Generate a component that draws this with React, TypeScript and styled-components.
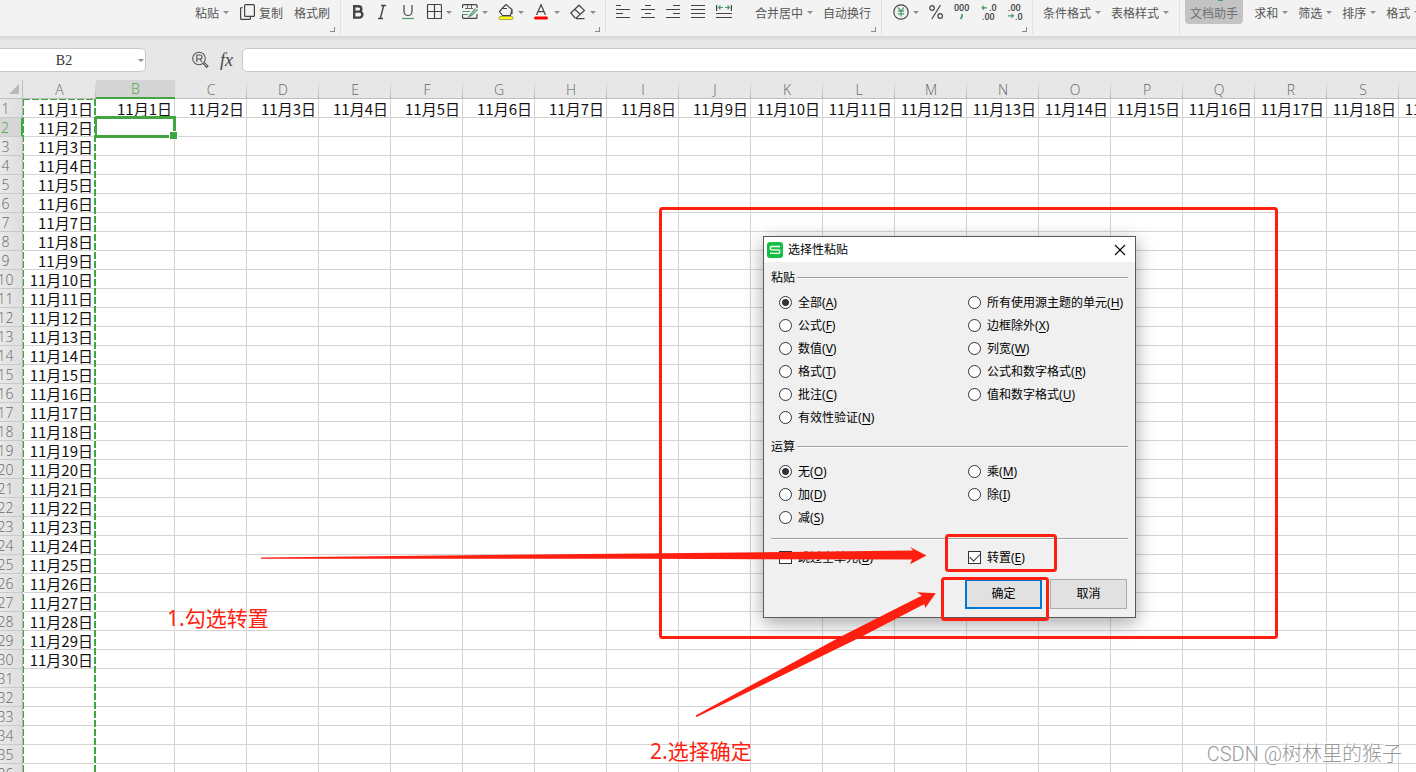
import React from "react";
import styled, { createGlobalStyle, css } from "styled-components";

const RED = "#ff1f10";
const GREEN = "#41a541";
const INK = "#444444";
const ICON_GREEN = "#4f9a6d";

const GlobalStyle = createGlobalStyle`
  * { box-sizing: border-box; }
  html, body { margin: 0; padding: 0; overflow: hidden; }
  body, button, input { font-family: "Noto Sans", "Noto Sans CJK SC", sans-serif; }
  button { margin: 0; padding: 0; border: 0; background: none; color: inherit; }
`;

const Page = styled.main`
  position: relative;
  height: 100vh;
  overflow: hidden;
  background: #e7e7e7;
`;

/* ---------- ribbon ---------- */

const Ribbon = styled.header`
  display: flex;
  height: 36px;
  background: #f3f3f3;
  overflow: hidden;
`;

const Group = styled.div<{ $start: number; $end?: number }>`
  position: relative;
  flex: none;
  display: flex;
  gap: 11px;
  height: 34px;
  padding: 0 ${(p) => p.$end ?? 10}px 0 ${(p) => p.$start}px;
  border-right: 1px solid #e0e0e0;
  &:last-child { border-right: 0; }
`;

const SubGroup = styled.div`
  display: flex;
  gap: 11px;
  margin-left: 12px;
`;

const Tool = styled.button<{ $active?: boolean }>`
  display: flex;
  align-items: center;
  gap: 4px;
  height: 24px;
  font-size: 12px;
  line-height: 18px;
  color: #555555;
  white-space: nowrap;
  svg { display: block; flex: none; }
  ${(p) =>
    p.$active &&
    css`
      position: relative;
      padding: 0 5px;
      border-radius: 0 0 4px 4px;
      background: #c3c3c3;
      color: #707070;
      &::before {
        content: "";
        position: absolute;
        top: 0;
        left: 33px;
        width: 5px;
        height: 1px;
        background: ${ICON_GREEN};
      }
    `}
`;

const Label = styled.span`
  padding-top: 4px;
`;

const Caret = styled.i`
  flex: none;
  width: 0;
  height: 0;
  margin-top: 1px;
  border: solid transparent;
  border-width: 3px 3px 0;
  border-top-color: #8c8c8c;
  margin-right: -1px;
`;

const Launcher = styled.i`
  position: absolute;
  right: 5px;
  bottom: 2px;
  width: 5px;
  height: 5px;
  border: solid #8a8a8a;
  border-width: 0 1px 1px 0;
`;

const Ico = ({ w = 14, children }: { w?: number; children: React.ReactNode }) => (
  <svg width={w} height={20} viewBox={`0 0 ${w} 20`} fill="none" stroke={INK} strokeWidth="1.2" aria-hidden="true">
    {children}
  </svg>
);

const AlignIcon = ({ rows }: { rows: number[][] }) => (
  <Ico>
    {rows.map(([x1, x2], i) => (
      <path key={i} strokeWidth="1" d={`M${x1} ${3.5 + i * 4}H${x2}`} />
    ))}
  </Ico>
);

/* ---------- formula bar ---------- */

const FormulaRow = styled.div`
  display: flex;
  height: 44px;
  padding: 12px 0 8px;
  background: linear-gradient(#d6d6d6, #e7e7e7 5px);
`;

const NameBox = styled.div`
  flex: none;
  display: flex;
  align-items: center;
  width: 157px;
  height: 24px;
  margin-left: -11px;
  border: 1px solid #c8c8c8;
  border-radius: 5px;
  background: #ffffff;
  input {
    width: 148px;
    min-width: 0;
    height: 22px;
    padding: 2px 0 0;
    border: 0;
    background: transparent;
    outline: 0;
    text-align: center;
    color: #333333;
    font: 14px "Liberation Serif", serif;
  }
  button {
    display: flex;
    align-items: center;
    height: 22px;
  }
`;

const FormulaTools = styled.div`
  flex: none;
  display: flex;
  align-items: center;
  justify-content: flex-end;
  gap: 9px;
  width: 96px;
  padding-right: 7px;
`;

const FxButton = styled.button`
  width: 17px;
  height: 24px;
  font: italic 18px/20px "Liberation Serif", serif;
  color: #444444;
`;

const FormulaInput = styled.input`
  flex: 1;
  height: 24px;
  margin-right: -10px;
  border: 1px solid #c8c8c8;
  border-radius: 5px;
  background: #ffffff;
  outline: 0;
`;

/* ---------- sheet ---------- */

const Sheet = styled.table`
  table-layout: fixed;
  width: 1482px;
  margin-left: -11px;
  border-collapse: separate;
  border-spacing: 0;
  background: #ffffff;
  font-family: "Noto Sans CJK SC", sans-serif;
`;

const Col = styled.col<{ $w: number }>`
  width: ${(p) => p.$w}px;
`;

const ColHead = styled.th<{ $on?: boolean }>`
  height: 19px;
  padding: 2px 0 0;
  border-bottom: 1px solid #bdbdbd;
  background:
    linear-gradient(#e7e7e7, #b8b8b8) right / 1px 100% no-repeat,
    #e7e7e7;
  font-family: "Open Sans", sans-serif;
  font-size: 14px;
  line-height: 16px;
  font-weight: 300;
  color: #666666;
  ${(p) =>
    p.$on &&
    css`
      padding-top: 1px;
      border-bottom: 2px solid ${GREEN};
      background: #d4d4d4;
      color: ${GREEN};
    `}
`;

const Corner = styled.th`
  height: 19px;
  padding: 0;
  border-right: 1px solid #bdbdbd;
  border-bottom: 1px solid #bdbdbd;
  background: #e7e7e7;
  svg { display: block; margin-left: 20px; }
`;

const RowHead = styled.th<{ $on?: boolean }>`
  height: 19px;
  padding: 2px 0 0;
  border-right: 1px solid #b4b4b4;
  border-bottom: 1px solid #c9c9c9;
  background: linear-gradient(90deg, #e9e9e9 30%, #dedede);
  font-family: "Open Sans", sans-serif;
  font-size: 14px;
  line-height: 16px;
  font-weight: 300;
  color: #666666;
  ${(p) =>
    p.$on &&
    css`
      border-right: 2px solid ${GREEN};
      background: #d6d6d6;
      color: ${GREEN};
    `}
`;

const Cell = styled.td`
  position: relative;
  height: 19px;
  padding: 2px 2px 0 0;
  border-right: 1px solid #d4d4d4;
  border-bottom: 1px solid #d4d4d4;
  font-size: 15px;
  line-height: 16px;
  text-align: right;
  white-space: nowrap;
  color: #111111;
`;

const dash = (angle: string) =>
  `repeating-linear-gradient(${angle}, ${GREEN} 0 7px, #ffffff 7px 9px)`;

const CopyMarquee = styled.div`
  position: absolute;
  z-index: 1;
  left: 0;
  top: 0;
  width: 73px;
  height: 100vh;
  background:
    ${dash("180deg")} left / 1px 100% no-repeat,
    ${dash("180deg")} right / 2px 100% no-repeat,
    ${dash("90deg")} top / 100% 1px no-repeat;
`;

const Selection = styled.div`
  position: absolute;
  z-index: 2;
  inset: -2px -2px -2px -1px;
  border: solid ${GREEN};
  border-width: 3px 3px 3px 2px;
  &::after {
    content: "";
    position: absolute;
    right: -5px;
    bottom: -5px;
    width: 7px;
    height: 7px;
    border: 1px solid #ffffff;
    background: ${GREEN};
  }
`;

/* ---------- dialog ---------- */

const Dialog = styled.section`
  position: absolute;
  z-index: 3;
  left: 763px;
  top: 236px;
  width: 373px;
  border: 1px solid #5a5a5a;
  background: #f0f0f0;
  box-shadow: 0 5px 18px rgba(0, 0, 0, 0.36);
  font-size: 12px;
  line-height: 18px;
  color: #000000;
`;

const TitleBar = styled.header`
  display: flex;
  align-items: center;
  gap: 5px;
  height: 25px;
  padding: 0 9px 0 3px;
  background: #ffffff;
  h2 { flex: 1; margin: 0; font-size: 12px; font-weight: 400; }
  button { height: 13px; }
  svg { display: block; }
`;

const Form = styled.form`
  padding: 7px 7px 8px;
`;

const FieldSet = styled.fieldset`
  min-width: 0;
  margin: 0 0 9px;
  padding: 0;
  border: 0;
`;

const Heading = styled.div`
  display: flex;
  align-items: center;
  gap: 2px;
  height: 18px;
  margin-bottom: 4px;
`;

const Rule = styled.div`
  flex: 1;
  height: 2px;
  border-top: 1px solid #a0a0a0;
  background: #ffffff;
`;

const Options = styled.div`
  display: grid;
  grid-template-columns: 189px 1fr;
  padding-left: 8px;
  align-items: start;
`;

const Choice = styled.label`
  display: flex;
  align-items: center;
  gap: 6px;
  height: 23px;
  white-space: nowrap;
  u { text-underline-offset: 2px; text-decoration-thickness: 1px; }
`;

const Radio = styled.input`
  appearance: none;
  flex: none;
  width: 13px;
  height: 13px;
  margin: 0;
  border: 1px solid #333333;
  border-radius: 50%;
  background: #ffffff;
  &:checked { background: radial-gradient(circle, #333333 3px, #ffffff 4px); }
`;

const Check = styled.input`
  appearance: none;
  flex: none;
  position: relative;
  width: 13px;
  height: 13px;
  margin: 0;
  border: 1px solid #333333;
  background: #ffffff;
  &:checked::after {
    content: "";
    position: absolute;
    left: 1px;
    top: 1px;
    width: 9px;
    height: 5px;
    border: solid #333333;
    border-width: 0 0 1px 1px;
    transform: rotate(-45deg);
  }
`;

const Checks = styled(Options)`
  padding-top: 6px;
`;

const Actions = styled.div`
  display: flex;
  justify-content: flex-end;
  gap: 8px;
  padding: 10px 1px 0 0;
`;

const DialogButton = styled.button<{ $primary?: boolean }>`
  width: 77px;
  height: 30px;
  border: ${(p) => (p.$primary ? "2px solid #0078d7" : "1px solid #adadad")};
  background: #e1e1e1;
  font-size: 12px;
  line-height: 18px;
  color: #000000;
`;

/* ---------- annotations ---------- */

const Ink = styled.svg`
  position: absolute;
  z-index: 4;
  left: 0;
  top: 0;
  pointer-events: none;
`;

const Note = styled.p<{ $x: number; $y: number }>`
  position: absolute;
  z-index: 4;
  left: ${(p) => p.$x}px;
  top: ${(p) => p.$y}px;
  margin: 0;
  font-size: 21px;
  line-height: 30px;
  color: ${RED};
`;

const Watermark = styled.p`
  position: absolute;
  z-index: 4;
  right: 14px;
  bottom: 4px;
  margin: 0;
  font-family: Roboto, "Noto Sans CJK SC", sans-serif;
  font-weight: 300;
  font-size: 20px;
  line-height: 28px;
  color: #999999;
  text-shadow: -1px -1px 0 #ffffff;
`;

const columns = "ABCDEFGHIJKLMNOPQRST".split("");
const rows = Array.from({ length: 36 }, (_, i) => i + 1);

const cellText = (col: number, row: number) => {
  if (col === 0) return row <= 30 ? `11月${row}日` : "";
  return row === 1 ? `11月${col}日` : "";
};

type Option = [string, string];

const pasteLeft: Option[] = [["全部", "A"], ["公式", "F"], ["数值", "V"], ["格式", "T"], ["批注", "C"], ["有效性验证", "N"]];
const pasteRight: Option[] = [["所有使用源主题的单元", "H"], ["边框除外", "X"], ["列宽", "W"], ["公式和数字格式", "R"], ["值和数字格式", "U"]];
const mathLeft: Option[] = [["无", "O"], ["加", "D"], ["减", "S"]];
const mathRight: Option[] = [["乘", "M"], ["除", "I"]];

const Radios = ({ name, items, first }: { name: string; items: Option[]; first?: boolean }) => (
  <div>
    {items.map(([text, key], i) => (
      <Choice key={key}>
        <Radio type="radio" name={name} value={key} defaultChecked={first && i === 0} />
        <span>{text}(<u>{key}</u>)</span>
      </Choice>
    ))}
  </div>
);

const Menu = ({ text }: { text: string }) => (
  <Tool type="button"><Label>{text}</Label><Caret /></Tool>
);

const tiny = { fontFamily: "Roboto, sans-serif", fontSize: 9, fontWeight: 500, fill: INK, stroke: "none" };

export default function App() {
  return (
    <Page>
      <GlobalStyle />
      <Ribbon>
        <Group $start={195}>
          <Menu text="粘贴" />
          <Tool type="button">
            <Ico w={16}>
              <rect x="5.6" y="2.6" width="9.8" height="11.8" rx="1" />
              <path d="M3.5 5.6H2.6a1 1 0 0 0-1 1V16.4a1 1 0 0 0 1 1H10.4a1 1 0 0 0 1-1V15" />
            </Ico>
            <Label>复制</Label>
          </Tool>
          <Tool type="button"><Label>格式刷</Label></Tool>
          <Launcher />
        </Group>
        <Group $start={10}>
          <Tool type="button" aria-label="加粗">
            <Ico><path strokeWidth="2.4" d="M3.2 4.2H7.6a2.7 2.7 0 0 1 0 5.4H3.2zM3.2 9.6H8.4a3 3 0 0 1 0 6H3.2z" /></Ico>
          </Tool>
          <Tool type="button" aria-label="倾斜">
            <Ico><path d="M5 3.5H10M2 16.5H7M7.7 3.5L4.3 16.5" strokeWidth="1.4" /></Ico>
          </Tool>
          <Tool type="button" aria-label="下划线">
            <Ico><path d="M3 3V9.5a4 4 0 0 0 8 0V3" /><path stroke={ICON_GREEN} d="M1 16.5H13" /></Ico>
          </Tool>
          <Tool type="button" aria-label="边框">
            <Ico w={16}><rect x="1.5" y="2.5" width="14" height="14" rx="1" /><path d="M8.5 3V16M2 9.5H15" /></Ico>
            <Caret />
          </Tool>
          <Tool type="button" aria-label="单元格样式">
            <Ico w={16}>
              <path d="M15 6V3.6a1 1 0 0 0-1-1H1.5a1 1 0 0 0-1 1V6M.5 12V15.4a1 1 0 0 0 1 1H14a1 1 0 0 0 1-1V12" />
              <path stroke={ICON_GREEN} d="M0 9.5H8M0 12.5H6M13.5 6.5L8.5 12.5 7 14.5 9.8 13.3 15.6 7.5" />
              <path d="M3 6.5H11M5.5 3V6M9.5 3V6" strokeWidth=".8" />
            </Ico>
            <Caret />
          </Tool>
          <Tool type="button" aria-label="填充颜色">
            <Ico w={16}>
              <path d="M4 6.5L8 2.5 14 7.5 12.5 13.5H4.5L1.5 9.5 4 6.5H9M14 7.5V12" />
              <rect x="1" y="14.5" width="14" height="3" rx="1.2" fill="#ffff00" stroke="#8f8f50" strokeWidth=".8" />
            </Ico>
            <Caret />
          </Tool>
          <Tool type="button" aria-label="字体颜色">
            <Ico w={16}>
              <path d="M2.5 13L7 2.8 11.5 13M4 9.6H10" />
              <rect x="0" y="14.5" width="14" height="3" rx="1.5" fill="#ff0000" stroke="none" />
            </Ico>
            <Caret />
          </Tool>
          <Tool type="button" aria-label="清除">
            <Ico w={16}><path d="M.8 11L9 3.2 14.4 8.4 6.2 16H5L.8 11zM4.7 7.2L10.4 12.4M6 16.6H14.5" /></Ico>
            <Caret />
          </Tool>
          <Launcher />
        </Group>
        <Group $start={10}>
          <Tool type="button" aria-label="左对齐"><AlignIcon rows={[[0, 5], [0, 14], [0, 7], [0, 14]]} /></Tool>
          <Tool type="button" aria-label="居中"><AlignIcon rows={[[4, 10], [0, 14], [4, 10], [0, 14]]} /></Tool>
          <Tool type="button" aria-label="右对齐"><AlignIcon rows={[[7, 14], [0, 14], [7, 14], [0, 14]]} /></Tool>
          <Tool type="button" aria-label="两端对齐"><AlignIcon rows={[[0, 14], [0, 14], [0, 14], [0, 14]]} /></Tool>
          <Tool type="button" aria-label="分散对齐">
            <Ico w={16}>
              <path d="M.6 3V9M15.4 3V9M0 11.5H16M0 15.5H16" />
              <path stroke={ICON_GREEN} d="M2.5 5.5H7M9 5.5H13.5M4.5 3.5L2.5 5.5 4.5 7.5M11.5 3.5L13.5 5.5 11.5 7.5" />
            </Ico>
          </Tool>
          <SubGroup>
            <Menu text="合并居中" />
            <Tool type="button"><Label>自动换行</Label></Tool>
          </SubGroup>
          <Launcher />
        </Group>
        <Group $start={11} $end={6}>
          <Tool type="button" aria-label="货币格式">
            <Ico w={16}>
              <circle cx="8" cy="10" r="7.2" />
              <path stroke={ICON_GREEN} d="M5 5.5L8 9 11 5.5M8 9V14.5M4.8 9.2H11.2M4.8 11.8H11.2" />
            </Ico>
            <Caret />
          </Tool>
          <Tool type="button" aria-label="百分比">
            <Ico><circle cx="3" cy="6" r="2.3" /><circle cx="11.2" cy="14" r="2.3" /><path d="M11.5 3L2.8 17" /></Ico>
          </Tool>
          <Tool type="button" aria-label="千位分隔">
            <Ico w={16}>
              <text x="0" y="9" {...tiny}>000</text>
              <path stroke={ICON_GREEN} strokeWidth="1.8" d="M8 12V14.5L6.5 17" />
            </Ico>
          </Tool>
          <Tool type="button" aria-label="减少小数位">
            <Ico w={16}>
              <text x="8" y="9" {...tiny}>.0</text><text x="1" y="18" {...tiny}>.00</text>
              <path stroke={ICON_GREEN} d="M1 5.8H6M3 3.8L1 5.8 3 7.8" />
            </Ico>
          </Tool>
          <Tool type="button" aria-label="增加小数位">
            <Ico w={18}>
              <text x="0" y="9" {...tiny}>.00</text><text x="7" y="18" {...tiny}>.0</text>
              <path stroke={ICON_GREEN} d="M0 13.8H5.5M3.5 11.8L5.5 13.8 3.5 15.8" />
            </Ico>
          </Tool>
          <Launcher />
        </Group>
        <Group $start={10} $end={11}>
          <Menu text="条件格式" />
          <Menu text="表格样式" />
        </Group>
        <Group $start={5}>
          <Tool type="button" $active><Label>文档助手</Label></Tool>
          <Menu text="求和" />
          <Menu text="筛选" />
          <Menu text="排序" />
          <Menu text="格式" />
        </Group>
      </Ribbon>

      <FormulaRow>
        <NameBox>
          <input aria-label="名称框" defaultValue="B2" />
          <button type="button" aria-label="展开名称框"><Caret /></button>
        </NameBox>
        <FormulaTools>
          <Tool type="button" aria-label="查找">
            <svg width="17" height="18" viewBox="0 0 17 18" fill="none" stroke="#555555" strokeWidth="1.1">
              <circle cx="7" cy="7.5" r="6.3" />
              <path d="M4.8 11V4H8a2 2 0 0 1 0 4H5M7.8 8L9.8 11" />
              <path d="M11 12.4L14.6 16.4 16 15 12.2 11.4" />
            </svg>
          </Tool>
          <FxButton type="button">fx</FxButton>
        </FormulaTools>
        <FormulaInput aria-label="编辑栏" />
      </FormulaRow>

      <Sheet>
        <colgroup>
          <Col $w={34} /><Col $w={73} /><Col $w={79} />
          {columns.slice(2).map((c) => <Col key={c} $w={72} />)}
        </colgroup>
        <thead>
          <tr>
            <Corner aria-label="全选">
              <svg width="10" height="10" viewBox="0 0 10 10"><path d="M10 0V10H0z" fill="#b9b9b9" /></svg>
            </Corner>
            {columns.map((c) => <ColHead key={c} scope="col" $on={c === "B"}>{c}</ColHead>)}
          </tr>
        </thead>
        <tbody>
          {rows.map((r) => (
            <tr key={r}>
              <RowHead scope="row" $on={r === 2}>{r}</RowHead>
              {columns.map((c, i) => (
                <Cell key={c}>
                  {cellText(i, r)}
                  {i === 0 && r === 1 && <CopyMarquee />}
                  {c === "B" && r === 2 && <Selection />}
                </Cell>
              ))}
            </tr>
          ))}
        </tbody>
      </Sheet>

      <Dialog role="dialog" aria-labelledby="dialog-title">
        <TitleBar>
          <svg width="16" height="16" viewBox="0 0 16 16" fill="none">
            <rect width="16" height="16" rx="3" fill="#13c044" />
            <path d="M13 4.5H4.6a1.3 1.3 0 0 0-1.3 1.3v.7a1.3 1.3 0 0 0 1.3 1.3h6.9a1.3 1.3 0 0 1 1.3 1.3v1a1.3 1.3 0 0 1-1.3 1.3H3" stroke="#ffffff" strokeWidth="1.3" />
          </svg>
          <h2 id="dialog-title">选择性粘贴</h2>
          <button type="button" aria-label="关闭">
            <svg width="12" height="12" viewBox="0 0 12 12" stroke="#000000" strokeWidth="1.1"><path d="M1 1L11 11M11 1L1 11" /></svg>
          </button>
        </TitleBar>
        <Form onSubmit={(e) => e.preventDefault()}>
          <FieldSet aria-label="粘贴">
            <Heading>粘贴<Rule /></Heading>
            <Options>
              <Radios name="paste" items={pasteLeft} first />
              <Radios name="paste" items={pasteRight} />
            </Options>
          </FieldSet>
          <FieldSet aria-label="运算">
            <Heading>运算<Rule /></Heading>
            <Options>
              <Radios name="math" items={mathLeft} first />
              <Radios name="math" items={mathRight} />
            </Options>
          </FieldSet>
          <Rule />
          <Checks>
            <Choice><Check type="checkbox" /><span>跳过空单元(<u>B</u>)</span></Choice>
            <Choice><Check type="checkbox" defaultChecked /><span>转置(<u>E</u>)</span></Choice>
          </Checks>
          <Actions>
            <DialogButton type="submit" $primary>确定</DialogButton>
            <DialogButton type="button">取消</DialogButton>
          </Actions>
        </Form>
      </Dialog>

      <Ink width="1416" height="772" viewBox="0 0 1416 772" fill="none" stroke={RED} strokeWidth="3" aria-hidden="true">
        <rect x="660.5" y="208.5" width="616" height="429" rx="2" />
        <rect x="946.5" y="535.5" width="109" height="35" rx="2" />
        <rect x="942.5" y="578.5" width="105" height="41" rx="2" />
        <path stroke="none" fill={RED} d="M261 557.4L640 553.5 913 550.5 910 547 926.5 555.5 910 564.2 912 559.6 640 558.8 261 558.8z" />
        <path stroke="none" fill={RED} d="M695.6 715.6L840 637 919 597 922 595.8 917 592.2 935.8 593.2 925.2 608 924.4 604.2 921.5 605.4 860 637.5 696.6 717z" />
      </Ink>
      <Note $x={167} $y={603}>1.勾选转置</Note>
      <Note $x={650} $y={736}>2.选择确定</Note>
      <Watermark>CSDN @树林里的猴子</Watermark>
    </Page>
  );
}
